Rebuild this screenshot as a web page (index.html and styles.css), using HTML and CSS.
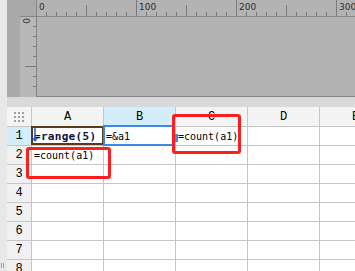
FILE: index.html
```html
<!DOCTYPE html>
<html lang="en">
<head>
  <meta charset="UTF-8" />
  <title>Report Designer - Sheet</title>
  <link rel="stylesheet" href="styles.css">
</head>
<body>
<div class="app">
  <div class="designer">
    <div class="corner"></div>
    <div class="hruler">
      <svg width="318" height="16" viewBox="0 0 318 16">
        <path class="tick" d="M9.5 12V16M19.5 12V16M29.5 12V16M39.5 12V16M49.5 5V16M59.5 12V16M69.5 12V16M79.5 12V16M89.5 12V16M99.5 0V16
          M109.5 12V16M119.5 12V16M129.5 12V16M139.5 12V16M149.5 5V16M159.5 12V16M169.5 12V16M179.5 12V16M189.5 12V16M199.5 0V16
          M209.5 12V16M219.5 12V16M229.5 12V16M239.5 12V16M249.5 5V16M259.5 12V16M269.5 12V16M279.5 12V16M289.5 12V16M299.5 0V16
          M309.5 12V16"/>
        <text x="2" y="10">0</text>
        <text x="102" y="10">100</text>
        <text x="202" y="10">200</text>
        <text x="302" y="10">300</text>
      </svg>
    </div>
    <div class="vside">
      <div class="vgap"></div>
      <div class="vruler">
        <svg width="16" height="79" viewBox="0 0 16 79">
          <path class="tick" d="M13 9.5H16M13 19.5H16M13 29.5H16M13 39.5H16M5 49.5H16M13 59.5H16M13 69.5H16"/>
          <text transform="translate(3,1) rotate(90)">0</text>
        </svg>
      </div>
    </div>
    <div class="canvas"></div>
  </div>

  <div class="band"></div>

  <div class="sheet">
    <div class="grid">
      <div class="cell head corner-cell">
        <svg width="10" height="10" viewBox="0 0 10 10" class="grip">
          <rect x="0" y="0" width="2" height="2"/><rect x="4" y="0" width="2" height="2"/><rect x="8" y="0" width="2" height="2"/>
          <rect x="0" y="4" width="2" height="2"/><rect x="4" y="4" width="2" height="2"/><rect x="8" y="4" width="2" height="2"/>
          <rect x="0" y="8" width="2" height="2"/><rect x="4" y="8" width="2" height="2"/><rect x="8" y="8" width="2" height="2"/>
        </svg>
      </div>
      <div class="cell head">A</div>
      <div class="cell head active">B</div>
      <div class="cell head">C</div>
      <div class="cell head">D</div>
      <div class="cell head last">E</div>

      <div class="cell rowhead active">1</div>
      <div class="cell data bold">=range(5)</div>
      <div class="cell data">=&amp;a1</div>
      <div class="cell data">=count(a1)</div>
      <div class="cell data"></div>
      <div class="cell data last"></div>

      <div class="cell rowhead">2</div>
      <div class="cell data">=count(a1)</div>
      <div class="cell data"></div>
      <div class="cell data"></div>
      <div class="cell data"></div>
      <div class="cell data last"></div>

      <div class="cell rowhead">3</div>
      <div class="cell data"></div><div class="cell data"></div><div class="cell data"></div><div class="cell data"></div><div class="cell data last"></div>
      <div class="cell rowhead">4</div>
      <div class="cell data"></div><div class="cell data"></div><div class="cell data"></div><div class="cell data"></div><div class="cell data last"></div>
      <div class="cell rowhead">5</div>
      <div class="cell data"></div><div class="cell data"></div><div class="cell data"></div><div class="cell data"></div><div class="cell data last"></div>
      <div class="cell rowhead">6</div>
      <div class="cell data"></div><div class="cell data"></div><div class="cell data"></div><div class="cell data"></div><div class="cell data last"></div>
      <div class="cell rowhead">7</div>
      <div class="cell data"></div><div class="cell data"></div><div class="cell data"></div><div class="cell data"></div><div class="cell data last"></div>
      <div class="cell rowhead">8</div>
      <div class="cell data"></div><div class="cell data"></div><div class="cell data"></div><div class="cell data"></div><div class="cell data last"></div>
    </div>

    <!-- overlays: selections and annotation marks -->
    <div class="frame-edit"></div>
    <svg class="caret" width="6" height="15" viewBox="0 0 6 15">
      <path d="M3 0V11" stroke="#1d5fd6" stroke-width="1.5"/>
      <path d="M0 10H6L3 14Z" fill="#1d5fd6"/>
    </svg>
    <div class="frame-select"></div>
    <div class="mark mark-c1"></div>
    <div class="handle"></div>
    <div class="mark mark-a2"></div>
  </div>
  <div class="scroll-grip"></div>
</div>
</body>
</html>
```

FILE: styles.css
```css
html, body {
    margin: 0;
    padding: 0;
}
body {
    width: 355px;
    height: 271px;
    overflow: hidden;
    background: #e8e8e8;
}

.app {
    position: relative;
    padding-left: 7px;
    display: flex;
    flex-direction: column;
}

/* designer area with rulers */
.designer {
    display: grid;
    grid-template-columns: 29px 1fr;
    grid-template-rows: 16px 81px;
    background: #a9a9a9;
}
.corner {
    background: #a9a9a9;
}
.hruler {
    background: #b3b3b3;
    border-left: 1px solid #858585;
}
.hruler svg,
.vruler svg {
    display: block;
}
.tick {
    stroke: #7a7a7a;
    stroke-width: 1;
    fill: none;
}
.hruler text,
.vruler text {
    font-family: "DejaVu Sans", sans-serif;
    font-size: 9px;
    fill: #2e2e2e;
}
.vside {
    display: flex;
}
.vgap {
    width: 13px;
    background: #a9a9a9;
}
.vruler {
    width: 16px;
    background: #b8b8b8;
    border-top: 1px solid #858585;
}
.canvas {
    background: #b3b3b3;
    border-left: 1px solid #858585;
    border-top: 1px solid #858585;
    border-bottom: 1px solid #858585;
}

.band {
    height: 10px;
    background: #d9d9d9;
}

/* sheet */
.sheet {
    position: relative;
    height: 164px;
    background: #fff;
}
.grid {
    display: grid;
    grid-template-columns: 25px repeat(4, 72px) 1fr;
    grid-template-rows: 20px;
    grid-auto-rows: 19px;
}
.cell {
    box-sizing: border-box;
    border-right: 1px solid #c6c6c6;
    border-bottom: 1px solid #c6c6c6;
    font-family: "Liberation Mono", "DejaVu Sans Mono", monospace;
    font-size: 12px;
    color: #000;
    display: flex;
    align-items: center;
    overflow: hidden;
    white-space: nowrap;
}
.cell.last {
    border-right: none;
}
.head {
    background: #f4f4f4;
    justify-content: center;
}
.corner-cell {
    background: #f4f4f4;
}
.grip {
    fill: #a0a0a0;
}
.rowhead {
    background: #f1f1f1;
    justify-content: center;
}
.head.active,
.rowhead.active {
    background: #d4edfa;
}
.head.last {
    justify-content: flex-start;
    padding-left: 32px;
}
.data {
    background: #fff;
    padding-left: 2px;
    font-family: "DejaVu Sans Mono", "Liberation Mono", monospace;
    font-size: 10px;
}
.data.bold {
    font-weight: bold;
    font-size: 11px;
    letter-spacing: 0.3px;
    color: #101040;
}

.frame-edit {
    position: absolute;
    left: 24px;
    top: 19px;
    width: 73px;
    height: 19px;
    box-sizing: border-box;
    border: 2px solid #5b3a1c;
}
.caret {
    position: absolute;
    left: 25px;
    top: 21px;
}
.frame-select {
    position: absolute;
    left: 96px;
    top: 18px;
    width: 72px;
    height: 21px;
    box-sizing: border-box;
    border: 2px solid #3a8be6;
}
.handle {
    position: absolute;
    left: 168px;
    top: 27px;
    width: 3px;
    height: 8px;
    background: #3a8be6;
}
.mark {
    position: absolute;
    box-sizing: border-box;
    border: 3px solid #fb2020;
    border-radius: 3px;
}
.mark-c1 {
    left: 165px;
    top: 7px;
    width: 69px;
    height: 40px;
}
.mark-a2 {
    left: 19px;
    top: 40px;
    width: 85px;
    height: 32px;
}

.scroll-grip {
    position: absolute;
    left: 1px;
    top: 263px;
    width: 1px;
    height: 5px;
    border-left: 1px solid #a0a0a0;
    border-right: 1px solid #a0a0a0;
}
```
